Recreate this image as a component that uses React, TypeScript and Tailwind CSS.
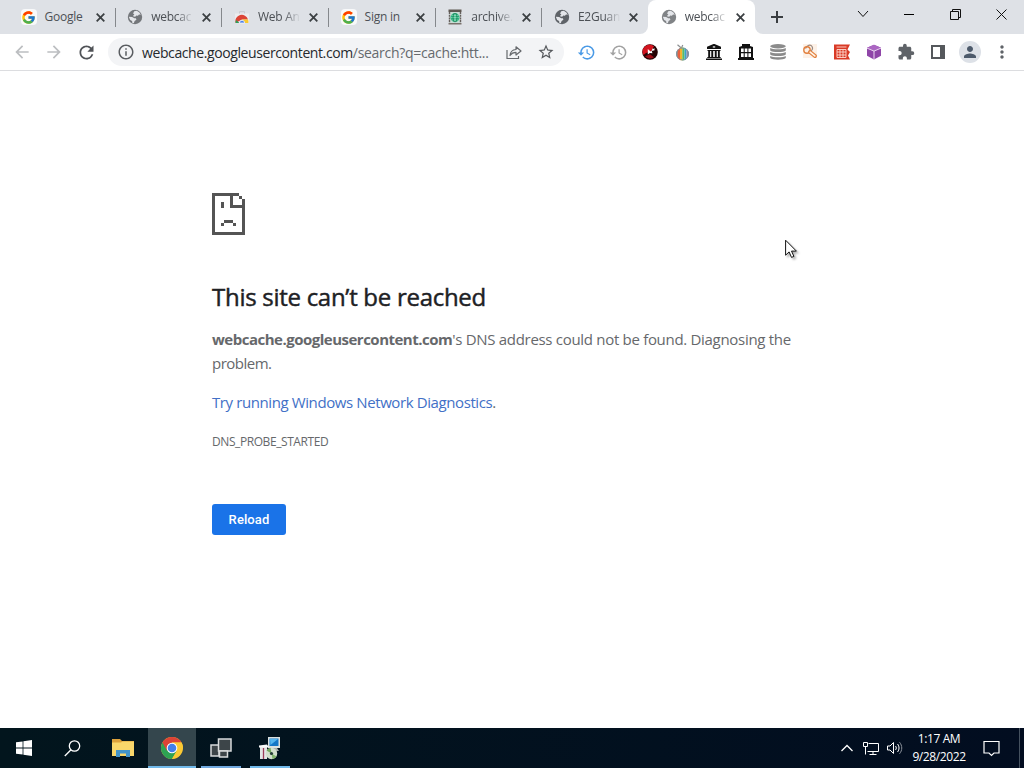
import type { ReactNode } from 'react'
import { FcGoogle } from 'react-icons/fc'
import {
  MdArrowBack,
  MdArrowForward,
  MdExtension,
  MdHistory,
  MdInfoOutline,
  MdMoreVert,
  MdPerson,
  MdRefresh,
  MdStarBorder,
} from 'react-icons/md'

interface TabItem {
  title: string
  icon: ReactNode
  active?: boolean
  faded?: boolean
}

const Globe = ({ color = '#5f6368' }: { color?: string }) => (
  <svg width="16" height="16" viewBox="0 0 16 16">
    <circle cx="8" cy="8" r="7.2" fill={color} />
    <path d="M7.2 2.3l2.6-.5 2.6 1.600 1.400 2.400-1.800-.3-1.100 1.300-1.600-.4-.7 1-1.900.3-.5-1.200 1.200-1-1.300-.9z" fill="#e4e6ea" />
    <path d="M1.800 7.800l3.300.1 2.200 1.300 1.600.1.500 1.500-1.800 1.200-.7 1.900-1.500.1-.3-2-1.900-1.100z" fill="#e4e6ea" />
  </svg>
)

const GoogleIcon = () => (
  <span className="flex size-4 items-center justify-center rounded-sm bg-[#f8f9fa]">
    <FcGoogle size={15} />
  </span>
)

const WebStoreIcon = () => (
  <svg width="16" height="16" viewBox="0 0 16 16">
    <path d="M1 4.500h14V14H1z" fill="#ececef" />
    <path d="M5.500 4.500V2.600h5v1.900" stroke="#c9cbd0" strokeWidth="1" fill="none" />
    <path d="M1.600 14a6.400 6.400 0 0 1 12.400-3.500H8z" fill="#dc4437" />
    <path d="M1.600 14a6.400 6.400 0 0 1 .4-3L5.700 14z" fill="#2f9e58" />
    <path d="M8 10.500h6a6.400 6.400 0 0 1 .4 3.500H9.500z" fill="#fbc92e" />
    <path d="M5.300 14a2.700 2.700 0 0 1 5.400 0z" fill="#4f82e8" stroke="#fff" strokeWidth=".7" />
  </svg>
)

const ArchiveIcon = () => (
  <svg width="16" height="16" viewBox="0 0 16 16">
    <path d="M1.500.5h13V3h-13z" fill="#5d5651" />
    <path d="M2.500 3h11v11h-11z" fill="#c9dcd5" />
    <path d="M2.500 3v11M13.500 3v11" stroke="#655f5c" strokeWidth="1.400" strokeDasharray="2 .7" />
    <path d="M1.500 14h13v1.500h-13z" fill="#7b716c" />
    <circle cx="8" cy="8.600" r="4.500" fill="#25b27b" />
    <path d="M3.700 8.600h8.600M8 4.200v8.800M4.500 6.400h7M4.500 11h7" stroke="#c6f0df" strokeWidth=".5" />
    <ellipse cx="8" cy="8.600" rx="2" ry="4.400" stroke="#146d4b" strokeWidth=".6" fill="none" />
  </svg>
)

const tabs: TabItem[] = [
  { title: 'Google', icon: <GoogleIcon /> },
  { title: 'webcac', icon: <Globe color="#74777b" />, faded: true },
  { title: 'Web An', icon: <WebStoreIcon />, faded: true },
  { title: 'Sign in', icon: <GoogleIcon /> },
  { title: 'archive.', icon: <ArchiveIcon />, faded: true },
  { title: 'E2Guan', icon: <Globe />, faded: true },
  { title: 'webcac', icon: <Globe color="#808386" />, active: true, faded: true },
]

const extensions: ReactNode[] = [
  <MdHistory size={19} color="#4a9ae6" />,
  <MdHistory size={19} color="#a2a2a2" />,
  <svg width="16" height="16" viewBox="0 0 16 16">
    <circle cx="8" cy="8" r="7.800" fill="#240304" />
    <path d="M1.500 11A7 7 0 0 1 12 2.200L9 7.500 4 9z" fill="#d3141f" />
    <path d="M3 12.300l5-2 4 3A7 7 0 0 1 3 12.300z" fill="#9d0d16" />
    <path d="M5.800 5v5.500l2-1.600 2.700.4-.8-2.200 2.900-.9-.3-2.200-1 1-1.400-.6.4 1.500-1.700 1.600z" fill="#fff" />
  </svg>,
  <svg width="16" height="17" viewBox="0 0 16 17">
    <defs>
      <clipPath id="tv">
        <ellipse cx="8.500" cy="10" rx="6.500" ry="6.500" />
      </clipPath>
    </defs>
    <path d="M3.500 .8l3.500 3M8.800 1L7.400 4" stroke="#8c8f91" strokeWidth="1.200" />
    <g clipPath="url(#tv)">
      <path d="M0 3h4v14H0z" fill="#7d98a5" />
      <path d="M3.500 3H6v14H3.500z" fill="#e8603e" />
      <path d="M6 3h2.300v14H6z" fill="#f4b22d" />
      <path d="M8.300 3h2.200v14H8.300z" fill="#5dba61" />
      <path d="M10.500 3h2v14h-2z" fill="#38a3c9" />
      <path d="M12.500 3H16v14h-3.500z" fill="#8b8aa8" />
    </g>
    <ellipse cx="8.500" cy="10" rx="6" ry="6" fill="none" stroke="#8196a0" />
  </svg>,
  <svg width="16" height="16" viewBox="0 0 16 16" fill="#111">
    <path d="M7.500 0h1l6.500 2.800V5H1V2.800zM1.500 6h13v1h-13zM2.200 7h1.900v6.500H2.200zM5.300 7h1.900v6.500H5.300zM8.800 7h1.900v6.500H8.800zM11.900 7h1.900v6.500h-1.900zM1.300 13h13.400v1H1.300zM0 14.500h16V16H0z" />
    <path d="M6.800 2.300h2.400v1.300H6.800z" fill="#eee" />
  </svg>,
  <svg width="16" height="16" viewBox="0 0 16 16">
    <path d="M4 0h8v2l3 1v2H1V3l3-1zM1 3h14v11H1zM0 14h16v2H0z" fill="#111" />
    <path d="M3 4.500h2.700V8H3zm3.700 0h2.700V8H6.700zm3.700 0H13V8h-2.600zM3 9.200h2.700V13H3zm3.700 0h2.700V13H6.700zm3.700 0H13V13h-2.600z" fill="#fff" />
  </svg>,
  <svg width="16" height="16" viewBox="0 0 16 16" fill="#8b8b8b">
    <ellipse cx="8" cy="2.200" rx="7.800" ry="2.200" />
    <path d="M.2 4c2 1.700 13.600 1.700 15.600 0v2.500c-2 2.100-13.600 2.100-15.600 0zM.2 8c2 1.700 13.600 1.700 15.600 0v2.400c-2 2-13.600 2-15.600 0zM.2 12c2 1.700 13.600 1.700 15.600 0v2c-2 2.200-13.600 2.200-15.600 0z" />
  </svg>,
  <svg width="16" height="16" viewBox="0 0 16 16" fill="none">
    <path d="M1 0h14v14H1z" fill="#fdf1e7" />
    <path d="M3.500 4.500C5 1.500 8.500 0 10 2.500s-.5 5-3.500 5.500" stroke="#9b8b82" strokeWidth="1.200" />
    <circle cx="5" cy="6" r="3.200" stroke="#e2803f" strokeWidth="1.400" />
    <path d="M8 8l5 4" stroke="#e2803f" strokeWidth="4" strokeLinecap="round" />
    <path d="M8.200 8.200l4.600 3.700" stroke="#fff5e9" strokeWidth="1.700" strokeLinecap="round" />
  </svg>,
  <svg width="16" height="16" viewBox="0 0 16 16">
    <path d="M0 .5h16l-2.500 5L16 8l-2 3.500 2 4H0z" fill="#d93a26" />
    <path d="M2.500 3h10M3 5.500h9v8H3zM6 5.500v8M9 5.500v8M3 8h9M3 11h9" stroke="#ffd9cf" strokeWidth=".9" fill="none" />
  </svg>,
  <svg width="16" height="16" viewBox="0 0 16 16">
    <path d="M8 .8l7 3v8L8 15.400l-7-3.600v-8z" fill="#8f45a8" />
    <path d="M8 .8l7 3-7 3-7-3z" fill="#ab66c2" />
    <path d="M1 4.100l7 3 7-3M8 7v8.200" stroke="#ecd7f2" strokeWidth="1" fill="none" />
  </svg>,
  <MdExtension size={18} color="#5f6368" />,
  <svg width="14" height="14" viewBox="0 0 14 14">
    <path d="M0 0h14v14H0z" fill="#55585c" />
    <path d="M2 2h7v10H2z" fill="#fff" />
  </svg>,
  <span className="flex size-[22px] items-center justify-center rounded-full bg-[#dde1e7]">
    <MdPerson size={18} color="#4d5a6b" />
  </span>,
  <MdMoreVert size={20} color="#5f6368" />,
]

const Tab = ({ title, icon, active, faded }: TabItem) => (
  <div
    className={`flex h-full w-[106.7px] shrink-0 items-center pl-[12.500px] ${
      active ? 'rounded-t-lg bg-white' : ''
    }`}
  >
    {icon}
    <span
      className={`ml-2 w-[47px] whitespace-nowrap text-[12px] tracking-[-0.25px] text-[#4c5055] ${
        faded ? '[mask-image:linear-gradient(to_right,#000_55%,transparent_90%)]' : ''
      }`}
    >
      {title}
    </span>
    <svg className="ml-[4px]" width="9" height="9" viewBox="0 0 9 9" stroke="#3c4043" strokeWidth="1.800">
      <path d="M.7.7l7.600 7.600M8.300.7L.7 8.300" />
    </svg>
  </div>
)

const TabStrip = () => (
  <div className="flex h-[34px] bg-[#dee1e6] pl-2">
    {tabs.map((tab, index) => (
      <div key={index} className="relative flex">
        <Tab {...tab} />
        {index < 5 && <span className="absolute -right-px top-2 h-[19px] w-px bg-[#85888c]" />}
        {tab.active && (
          <svg className="absolute -left-2 bottom-0" width="123" height="8" viewBox="0 0 123 8" fill="#fff">
            <path d="M0 8a8 8 0 0 0 8-8v8zM123 8a8 8 0 0 1-8-8v8z" />
          </svg>
        )}
      </div>
    ))}
    <div className="ml-[15px] flex items-center">
      <svg width="14" height="14" viewBox="0 0 14 14" stroke="#3a3d41" strokeWidth="2">
        <path d="M7 1v12M1 7h12" />
      </svg>
    </div>
    <div className="ml-auto flex h-7 items-center text-[#111]">
      <span className="flex w-[46px] justify-center">
        <svg width="12" height="8" viewBox="0 0 12 8" fill="none" stroke="currentColor">
          <path d="M1 1l5 5.500L11 1" />
        </svg>
      </span>
      <span className="flex w-[46px] justify-center">
        <span className="h-px w-[10px] bg-black" />
      </span>
      <span className="flex w-[46px] justify-center">
        <svg width="11" height="11" viewBox="0 0 11 11" fill="none" stroke="currentColor">
          <path d="M.5 2.500h8v8h-8zM2.500 2.500v-2h8v8h-2" />
        </svg>
      </span>
      <span className="flex w-[46px] justify-center">
        <svg width="11" height="11" viewBox="0 0 11 11" fill="none" stroke="currentColor">
          <path d="M.5.5l10 10M10.500.5l-10 10" />
        </svg>
      </span>
    </div>
  </div>
)

const Toolbar = () => (
  <div className="flex h-[37px] items-center gap-1.5 border-b border-[#dcdde0] bg-white px-1.5">
    <div className="flex">
      <span className="flex w-8 justify-center">
        <MdArrowBack size={20} color="#bcbec1" />
      </span>
      <span className="flex w-8 justify-center">
        <MdArrowForward size={20} color="#bcbec1" />
      </span>
      <span className="flex w-8 justify-center">
        <MdRefresh size={21} color="#505357" />
      </span>
    </div>
    <div className="flex h-7 w-[456px] items-center rounded-full bg-[#f3f4f6] pl-[9px]">
      <MdInfoOutline size={18} color="#5a5d61" />
      <span className="ml-[7px] w-[355px] whitespace-nowrap text-[14px] tracking-[-0.4px] text-[#26292d]">
        webcache.googleusercontent.com
        <span className="tracking-[-0.28px] text-[#666a6e]">/search?q=cache:htt...</span>
      </span>
      <span className="ml-px flex w-8 justify-center">
        <svg width="16" height="15" viewBox="0 0 16 15" fill="none" stroke="#66696d" strokeWidth="1.200">
          <path d="M1 5v8.500h11.500V11" />
          <path d="M4 10.500c.3-4 2.500-5.700 6-6V1.800L15 6l-5 4V7.300c-2.600 0-4.400.8-6 3.200z" strokeLinejoin="round" />
        </svg>
      </span>
      <span className="flex w-8 justify-center">
        <MdStarBorder size={18} color="#55585c" />
      </span>
    </div>
    <div className="flex">
      {extensions.map((icon, index) => (
        <span key={index} className="flex h-7 w-8 items-center justify-center">
          {icon}
        </span>
      ))}
    </div>
  </div>
)

const SadPage = () => (
  <svg width="33" height="42" viewBox="0 0 11 14" fill="#545454" shapeRendering="crispEdges">
    <path d="M0 0h9v1H0zM0 0h1v14H0zM0 13h11v1H0zM10 2h1v12h-1zM9 1h1v1H9zM6 1h1v3H6zM6 4h5v1H6zM3 3h1v2H3zM4 9h3v1H4zM3 10h1v1H3zM7 10h1v1H7z" />
  </svg>
)

const ErrorPage = () => (
  <main className="flex-1 bg-white pl-[212px] pt-[122px] text-[#66686b]">
    <SadPage />
    <h1 className="mt-[46px] whitespace-nowrap text-[24px] leading-8 tracking-[-0.28px] text-[#202124] [-webkit-text-stroke:0.45px_#202124]">
      This site can’t be reached
    </h1>
    <p className="mt-[14px] w-[600px] text-[15px] leading-6">
      <span className="whitespace-nowrap tracking-[-0.3px]">
        <strong className="font-bold tracking-[-0.5px]">webcache.googleusercontent.com</strong>
        's DNS address could not be found. Diagnosing the
      </span>
      <br />
      <span className="tracking-[-0.500px]">problem.</span>
    </p>
    <p className="mt-[15px] text-[15px] leading-6 tracking-[-0.4px]">
      <span className="text-[#4270c6]">Try running Windows Network Diagnostics</span>.
    </p>
    <p className="mt-[19px] text-[12px] leading-[18px] tracking-[-0.42px]">DNS_PROBE_STARTED</p>
    <button className="mt-[53px] block h-[31px] w-[74px] rounded-[3px] bg-[#1a73e8] font-[Roboto] text-[13px] font-medium tracking-[0.1px] text-white">
      Reload
    </button>
  </main>
)

const ChromeLogo = () => (
  <svg width="24" height="24" viewBox="0 0 24 24">
    <circle cx="12" cy="12" r="11" fill="#fbc934" />
    <path d="M12 12L2.470 6.500A11 11 0 0 0 12 23l5-8.500z" fill="#2ea353" />
    <path d="M12 12l-5 2.800L2.470 6.500A11 11 0 0 1 21.530 6.500H12z" fill="#dc4336" />
    <path d="M12 12h10.500A11 11 0 0 1 12 23l4.700-8z" fill="#fbc934" />
    <path d="M12 6.500h9.530A11 11 0 0 1 23 12l-6 2z" fill="#fbc934" />
    <circle cx="12" cy="12" r="5.300" fill="#fff" />
    <circle cx="12" cy="12" r="4.300" fill="#437fea" />
  </svg>
)

const Taskbar = () => (
  <footer className="flex h-10 bg-linear-to-r from-[#02151d] to-[#020d20] text-white">
    <div className="flex w-12 items-center justify-center">
      <svg width="16" height="16" viewBox="0 0 16 16" fill="#fff">
        <path d="M0 2.300l6.600-.9v6.200H0zM7.400 1.300L16 0v7.600H7.400zM0 8.400h6.600v6.200L0 13.700zM7.400 8.400H16V16l-8.600-1.300z" />
      </svg>
    </div>
    <div className="flex w-12 items-center justify-center">
      <svg width="17" height="17" viewBox="0 0 17 17" fill="none" stroke="#fff" strokeWidth="1.300">
        <circle cx="10.500" cy="6" r="5.200" />
        <path d="M7 9.800L.8 16" />
      </svg>
    </div>
    <div className="flex w-[52px] items-center justify-center pl-0.5">
      <svg width="22" height="18" viewBox="0 0 22 18">
        <path d="M0 0h8l2 2h12v3H0z" fill="#dca13b" />
        <path d="M0 3.500h9l1.500-1H22V17H0z" fill="#f9d76b" />
        <path d="M4 11h14v7h-4v-3.500H8V18H4z" fill="#4294c9" />
      </svg>
    </div>
    <div className="flex w-12 items-center justify-center border-b-2 border-[#71b9ea] bg-[#34464d] pt-0.5">
      <ChromeLogo />
    </div>
    <div className="ml-[5px] flex w-10 items-center justify-center border-b-2 border-[#71a9df] pt-0.5">
      <svg width="22" height="20" viewBox="0 0 22 20" stroke="#d8dadb" strokeWidth="1.500" fill="#3d4549">
        <path d="M1 7h8v11H1z" />
        <path d="M8.500 1H21v12H8.500z" />
        <path d="M9.500 13h8v6h-8z" />
      </svg>
    </div>
    <div className="ml-[9px] flex w-10 items-center justify-center border-b-2 border-[#71b9ea] pt-0.5">
      <svg width="24" height="24" viewBox="0 0 24 24">
        <path d="M10 1h12v11H10z" fill="#dce1df" />
        <path d="M11.500 2.500h9v7.500h-9z" fill="#1476c6" />
        <path d="M12 3h8l-7.500 6z" fill="#55b5ee" />
        <path d="M14 12h5l2 3h-9z" fill="#a8adab" />
        <path d="M2 11h7v12H2z" fill="#e4e5e5" />
        <path d="M1 9.500l8-1 2 3H1z" fill="#fafafa" />
        <path d="M5.500 12v11" stroke="#9c3b58" strokeWidth="1.300" />
        <circle cx="13.500" cy="17.500" r="5.700" fill="#d3dfcc" />
        <path d="M13.500 17.500L8.500 14.500a6 6 0 0 1 4-2.800z" fill="#74a75e" />
        <path d="M13.500 17.500l5 3a6 6 0 0 1-4 2.500z" fill="#83b56d" />
        <circle cx="13.500" cy="17.500" r="1.600" fill="#263e36" />
      </svg>
    </div>
    <div className="ml-auto flex items-center">
      <svg width="12" height="8" viewBox="0 0 12 8" fill="none" stroke="#fff" strokeWidth="1.300">
        <path d="M.5 7L6 1.500 11.500 7" />
      </svg>
      <svg className="ml-[10px]" width="17" height="15" viewBox="0 0 17 15" fill="none" stroke="#fff">
        <path d="M5.500 2.500h10v8H4.500M6.500 13.500h7M10 10.500v3M.5 1.500h4v4h-4zM2.500 5.500v8" />
      </svg>
      <svg className="ml-[7px]" width="16" height="14" viewBox="0 0 16 14" fill="none" stroke="#fff">
        <path d="M.5 5h2.500L6.500 1.500v11L3 9H.5z" />
        <path d="M8.500 5c1 1.200 1 2.800 0 4M10.500 3c2 2.300 2 5.700 0 8" />
        <path d="M12.500 1.200c3 3.500 3 8.100 0 11.600" stroke="#8a9099" />
      </svg>
      <div className="ml-[5px] w-[62px] text-center text-[12px] leading-[18px] tracking-[-0.4px]">
        <div>1:17 AM</div>
        <div>9/28/2022</div>
      </div>
      <svg className="ml-[13px]" width="17" height="17" viewBox="0 0 17 17" fill="none" stroke="#fff" strokeWidth="1.200">
        <path d="M1 1.500h15v11.500h-5L8.500 15.500 6 13H1z" />
      </svg>
      <span className="ml-[19px] mr-1 h-10 w-px bg-[#45515f]" />
    </div>
  </footer>
)

const App = () => {
  return (
    <div className="relative flex h-screen w-full flex-col overflow-hidden bg-white font-['Open_Sans',sans-serif]">
      <TabStrip />
      <Toolbar />
      <ErrorPage />
      <Taskbar />

      {/* Mouse pointer */}
      <svg
        className="absolute left-[785px] top-[239px] drop-shadow-[2px_2px_1px_rgba(0,0,0,0.3)]"
        width="13"
        height="20"
        viewBox="0 0 13 20"
      >
        <path d="M.6 1.200v15l3.500-3.300 2.400 5.500 2.400-1-2.400-5.300h4.900z" fill="#fff" stroke="#111" />
      </svg>
    </div>
  )
}

export default App
